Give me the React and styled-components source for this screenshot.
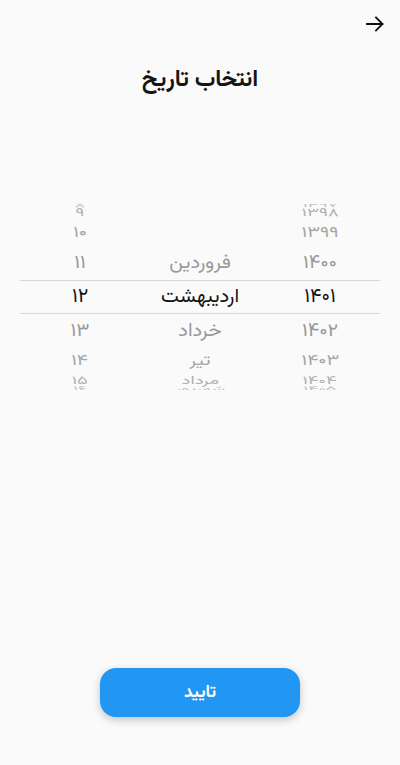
import React from "react";
import styled, { createGlobalStyle } from "styled-components";

const FONT = `"Vazirmatn", "Noto Sans Arabic", "DejaVu Sans", "Noto Sans", sans-serif`;

const Global = createGlobalStyle`
  html, body { margin: 0; padding: 0; background: #fafafa; }
  body { font-family: ${FONT}; }
`;

const Page = styled.div`
  direction: rtl;
  min-height: 765px;
  display: flex;
  flex-direction: column;
  background: #fafafa;
`;

const TopBar = styled.div`
  height: 48px;
  display: flex;
  align-items: center;
  justify-content: flex-start;
  padding: 0 16px;
`;

const BackButton = styled.button`
  border: none;
  background: transparent;
  padding: 0;
  width: 18px;
  height: 16px;
  display: flex;
  color: #111;
  cursor: pointer;
`;

const Title = styled.h1`
  margin: 16px 0 0;
  height: 32px;
  line-height: 32px;
  text-align: center;
  font-size: 23px;
  font-weight: 700;
  color: #151515;
`;

const Wheel = styled.div`
  margin-top: 108px;
  height: 186px;
  overflow: hidden;
  display: flex;
  padding: 0 20px;
`;

const Column = styled.div`
  flex: 1;
  display: flex;
  flex-direction: column;
`;

const Row = styled.div`
  box-sizing: border-box;
  flex: none;
  display: flex;
  align-items: center;
  justify-content: center;
  white-space: nowrap;
  font-size: 20px;
  color: ${(p) => (p.$selected ? "#111" : "#999")};
  border-top: ${(p) => (p.$selected ? "1px solid #d6d6d6" : "none")};
  border-bottom: ${(p) => (p.$selected ? "1px solid #d6d6d6" : "none")};
`;

const Label = styled.span`
  display: inline-block;
  line-height: 1;
`;

const Spacer = styled.div`
  flex: 1;
`;

const Confirm = styled.button`
  align-self: center;
  width: 200px;
  height: 49px;
  margin-bottom: 48px;
  border: none;
  border-radius: 16px;
  background: #2196f3;
  color: #fff;
  font-family: ${FONT};
  font-size: 17px;
  font-weight: 700;
  box-shadow: 0 3px 8px rgba(0, 0, 0, 0.22);
  cursor: pointer;
`;

const fa = (n) =>
  String(n).replace(/[0-9]/g, (d) => "۰۱۲۳۴۵۶۷۸۹"[d]);

const R = 93;
const ALPHA = 22.1;
const rad = (d) => (d * Math.PI) / 180;
const clampDeg = (d) => Math.max(-90, Math.min(90, d));
const edge = (k) => R * Math.sin(rad(clampDeg(k * ALPHA)));

const KS = [-4, -3, -2, -1, 0, 1, 2, 3, 4];
const SCALE = [1, 0.93, 0.76, 0.58, 0.35];
const SHRINK = [1, 1, 0.97, 0.92, 0.88];

function bounds(k) {
  let top = k === 0 ? -17 : edge(k - 0.5);
  let bottom = k === 0 ? 17 : edge(k + 0.5);
  if (k === 1) top = 17;
  if (k === -1) bottom = -17;
  return bottom - top;
}

function WheelColumn({ items }) {
  return (
    <Column>
      {KS.map((k, i) => {
        const h = bounds(k);
        const a = Math.abs(k);
        const opacity = k === 0 ? 1 : Math.max(0.45, 1 - (a - 1) * 0.12);
        return (
          <Row key={k} $selected={k === 0} style={{ height: h }}>
            <Label
              style={{
                transform: `scale(${SHRINK[a]}, ${SCALE[a]})`,
                opacity,
              }}
            >
              {items[i]}
            </Label>
          </Row>
        );
      })}
    </Column>
  );
}

const years = KS.map((k) => fa(1401 + k));
const months = ["", "", "", "فروردین", "اردیبهشت", "خرداد", "تیر", "مرداد", "شهریور"];
const days = KS.map((k) => fa(12 + k));

export default function App() {
  return (
    <>
      <Global />
      <Page>
        <TopBar>
          <BackButton aria-label="بازگشت">
            <svg width="18" height="16" viewBox="0 0 18 16" fill="none">
              <path
                d="M1 8H16.5M10 1.5L16.5 8L10 14.5"
                stroke="currentColor"
                strokeWidth="1.8"
                strokeLinecap="square"
              />
            </svg>
          </BackButton>
        </TopBar>
        <Title>انتخاب تاریخ</Title>
        <Wheel>
          <WheelColumn items={years} />
          <WheelColumn items={months} />
          <WheelColumn items={days} />
        </Wheel>
        <Spacer />
        <Confirm>تایید</Confirm>
      </Page>
    </>
  );
}
